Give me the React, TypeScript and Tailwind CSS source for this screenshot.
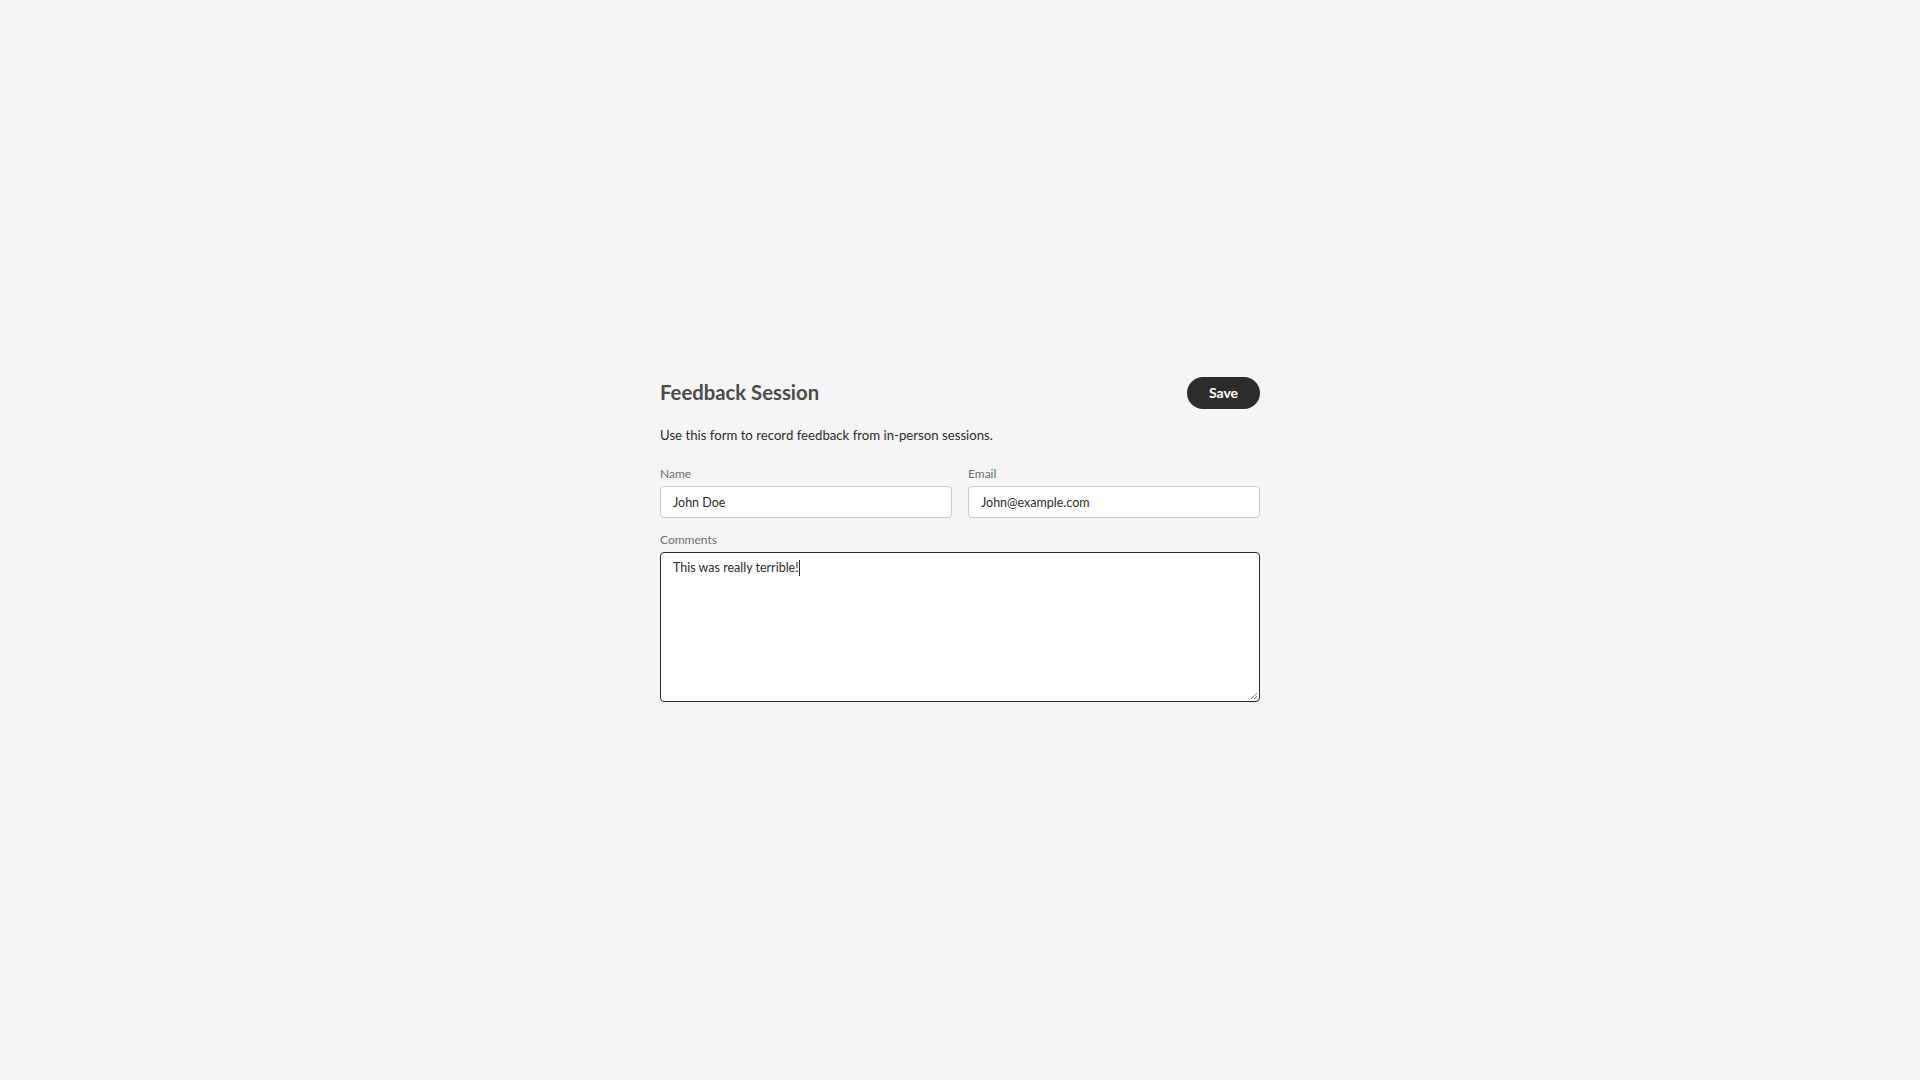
import React from "react";

export default function App() {
  return (
    <div
      className="min-h-screen w-full bg-[#f5f5f5] flex items-center justify-center pb-[1px]"
      style={{ fontFamily: "Lato, 'Noto Sans', sans-serif" }}
    >
      <div className="w-[600px] flex flex-col">
        <div className="flex items-center justify-between h-8">
          <h1 className="text-[20.3px] leading-[26px] font-bold text-[#4b4b4b] -mt-[2px]">Feedback Session</h1>
          <button className="h-8 w-[73px] rounded-full bg-[#2c2c2c] text-white text-[14px] font-bold leading-none">
            Save
          </button>
        </div>
        <p className="mt-[16px] text-[13.2px] leading-[20px] text-[#2c2c2c]">
          Use this form to record feedback from in-person sessions.
        </p>
        <div className="mt-[20px] grid grid-cols-2 gap-4">
          <label className="flex flex-col">
            <span className="text-[12px] leading-[17px] text-[#6e6e6e] mb-1">Name</span>
            <input
              readOnly
              value="John Doe"
              className="h-8 w-full rounded-[4px] border border-[#cacaca] bg-white px-3 text-[12.5px] text-[#2c2c2c] outline-none"
            />
          </label>
          <label className="flex flex-col">
            <span className="text-[12px] leading-[17px] text-[#6e6e6e] mb-1">Email</span>
            <input
              readOnly
              value="John@example.com"
              className="h-8 w-full rounded-[4px] border border-[#cacaca] bg-white px-3 text-[12.5px] text-[#2c2c2c] outline-none"
            />
          </label>
        </div>
        <label className="mt-[13px] flex flex-col">
          <span className="text-[12px] leading-[17px] text-[#6e6e6e] mb-1">Comments</span>
          <div className="relative h-[150px] w-full rounded-[4px] border border-[#2c2c2c] bg-white px-3 pt-[5px] text-[12.5px] leading-[20px] text-[#2c2c2c]">
            <span>This was really terrible!</span>
            <span className="inline-block w-px h-[16px] bg-[#2c2c2c] align-middle -mt-[2px]"></span>
            <svg className="absolute right-[1px] bottom-[1px]" width="8" height="8" viewBox="0 0 8 8">
              <line x1="1" y1="7" x2="7" y2="1" stroke="#808080" strokeWidth="1" />
              <line x1="4" y1="7" x2="7" y2="4" stroke="#808080" strokeWidth="1" />
            </svg>
          </div>
        </label>
      </div>
    </div>
  );
}
